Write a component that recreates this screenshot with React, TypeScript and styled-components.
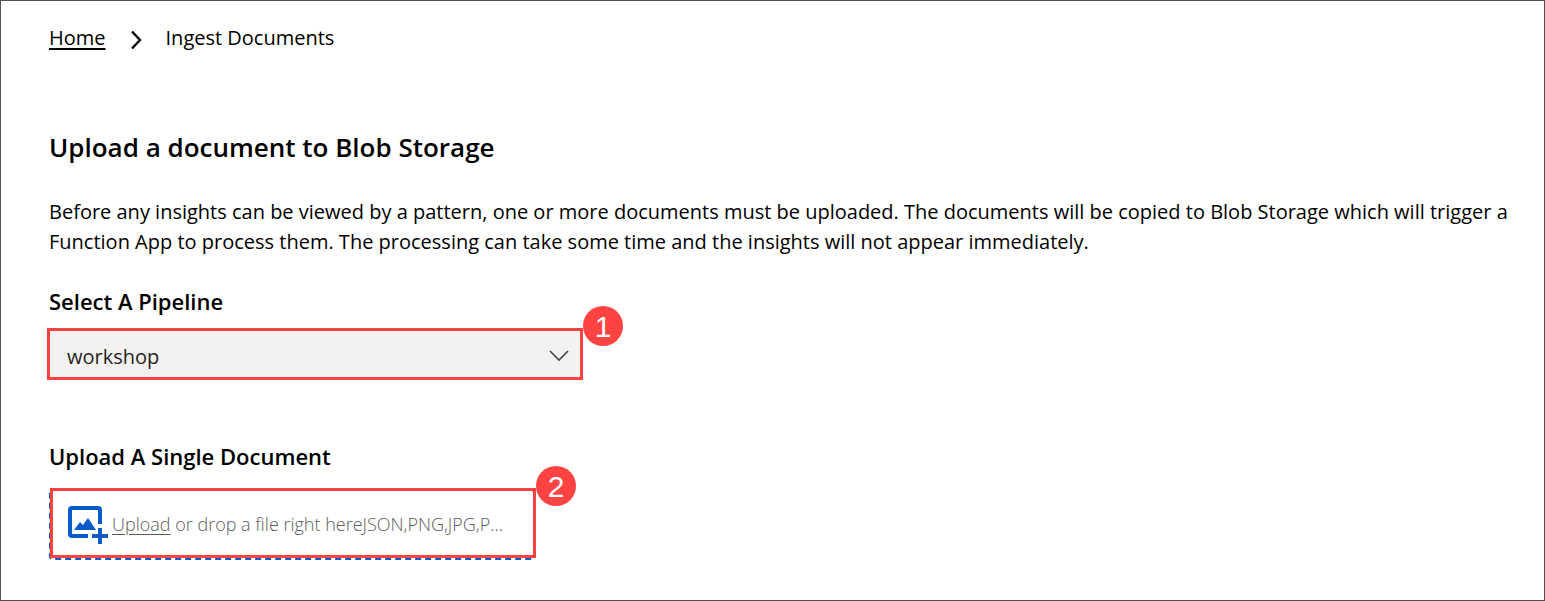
import React from "react";
import styled, { createGlobalStyle } from "styled-components";

const GlobalStyle = createGlobalStyle`
  *, *::before, *::after { box-sizing: border-box; }
  body {
    margin: 0;
    background: #fff;
    color: #000;
    font-family: "Open Sans", "Noto Sans", sans-serif;
    font-size: 20px;
    line-height: 30px;
  }
  h1, h2, p, ol { margin: 0; padding: 0; }
`;

const Page = styled.main`
  min-height: 100vh;
  padding: 22px 36px 40px 48px;
  border: 1px solid #544f50;
`;

const Breadcrumb = styled.ol`
  display: flex;
  align-items: center;
  list-style: none;
  margin-bottom: 76px;
`;

const Crumb = styled.li`
  display: flex;
  align-items: center;
`;

const CrumbLink = styled.a`
  color: inherit;
  text-decoration-thickness: 2px;
  text-underline-offset: 3px;
`;

const CrumbArrow = styled.svg`
  width: 12px;
  height: 20px;
  margin: 4px 24px 0;
`;

const Title = styled.h1`
  font-size: 26px;
  line-height: 36px;
  font-weight: 600;
  margin-bottom: 32px;
`;

const Intro = styled.p`
  margin-bottom: 29px;
`;

const Field = styled.section`
  & + & {
    margin-top: 63px;
  }
`;

const FieldLabel = styled.label<{ $gap: number }>`
  display: block;
  width: fit-content;
  font-size: 22px;
  font-weight: 600;
  margin-bottom: ${({ $gap }) => $gap}px;
`;

const Control = styled.div<{ $width: number }>`
  position: relative;
  width: ${({ $width }) => $width}px;
  max-width: 100%;
`;

const PipelineSelect = styled.select`
  display: block;
  width: 100%;
  height: 48px;
  padding: 6px 48px 0 18px;
  appearance: none;
  border: 0;
  border-radius: 3px;
  background: #f3f2f1;
  color: #242424;
  font: inherit;
`;

const SelectArrow = styled.svg`
  position: absolute;
  right: 12px;
  top: 19px;
  width: 20px;
  height: 14px;
  pointer-events: none;
`;

const DropZone = styled.label`
  display: flex;
  align-items: center;
  gap: 4px;
  height: 71px;
  padding: 1px 16px 0 17px;
  border: 2px dashed #0a5ac8;
  border-radius: 4px;
  color: #5c5c5c;
  font-size: 18px;
  line-height: 26px;
  font-weight: 300;
  white-space: nowrap;
  cursor: pointer;
`;

const DropText = styled.span`
  padding-bottom: 2px;
`;

const FileInput = styled.input`
  position: absolute;
  inset: 0;
  width: 100%;
  height: 100%;
  opacity: 0;
  cursor: pointer;
`;

const UploadIcon = styled.svg`
  flex: none;
  width: 40px;
  height: 38px;
`;

const Underlined = styled.span`
  text-decoration: underline;
  text-underline-offset: 3px;
`;

const Callout = styled.div<{ $inset: string }>`
  position: absolute;
  inset: ${({ $inset }) => $inset};
  border: 3px solid #ff4343;
  pointer-events: none;
`;

const CalloutNumber = styled.span`
  position: absolute;
  left: calc(100% + 3px);
  top: -25px;
  width: 40px;
  height: 40px;
  border-radius: 50%;
  background: #ff4343;
  color: #fff;
  font-family: "Liberation Sans", Arial, sans-serif;
  font-size: 30px;
  line-height: 42px;
  text-align: center;
`;

export default function App() {
  return (
    <>
      <GlobalStyle />
      <Page>
        <nav aria-label="Breadcrumb">
          <Breadcrumb>
            <Crumb>
              <CrumbLink href="#">Home</CrumbLink>
              <CrumbArrow viewBox="0 0 12 20" fill="none" stroke="#000" strokeWidth="2.4" aria-hidden="true">
                <path d="M2 1.5 10 10 2 18.5" />
              </CrumbArrow>
            </Crumb>
            <Crumb aria-current="page">Ingest Documents</Crumb>
          </Breadcrumb>
        </nav>
        <Title>Upload a document to Blob Storage</Title>
        <Intro>
          Before any insights can be viewed by a pattern, one or more documents must be uploaded. The documents will be
          copied to Blob Storage which will trigger a Function App to process them. The processing can take some time
          and the insights will not appear immediately.
        </Intro>
        <Field>
          <FieldLabel htmlFor="pipeline" $gap={14}>
            Select A Pipeline
          </FieldLabel>
          <Control $width={532}>
            <PipelineSelect id="pipeline" defaultValue="workshop">
              <option value="workshop">workshop</option>
            </PipelineSelect>
            <SelectArrow viewBox="0 0 20 14" fill="none" stroke="#444" strokeWidth="1.6" aria-hidden="true">
              <path d="M1 2 10 11 19 2" />
            </SelectArrow>
            <Callout $inset="-2px">
              <CalloutNumber>1</CalloutNumber>
            </Callout>
          </Control>
        </Field>
        <Field>
          <FieldLabel htmlFor="document" $gap={18}>
            Upload A Single Document
          </FieldLabel>
          <Control $width={486}>
            <DropZone htmlFor="document">
              <UploadIcon viewBox="0 0 40 38" aria-hidden="true">
                <path
                  d="M20 30H4Q2 30 2 28V4Q2 2 4 2H30Q32 2 32 4V18"
                  fill="none"
                  stroke="#0a5ac8"
                  strokeWidth="4"
                />
                <path d="M6 24 12 16 15 19 20 12 28 24Z" fill="#0a5ac8" />
                <path d="M24 30H40M32 22V38" fill="none" stroke="#0a5ac8" strokeWidth="4" />
              </UploadIcon>
              <DropText>
                <Underlined>Upload</Underlined> or drop a file right hereJSON,PNG,JPG,P...
              </DropText>
            </DropZone>
            <FileInput id="document" type="file" />
            <Callout $inset="-1px -1px 2px 1px">
              <CalloutNumber>2</CalloutNumber>
            </Callout>
          </Control>
        </Field>
      </Page>
    </>
  );
}
